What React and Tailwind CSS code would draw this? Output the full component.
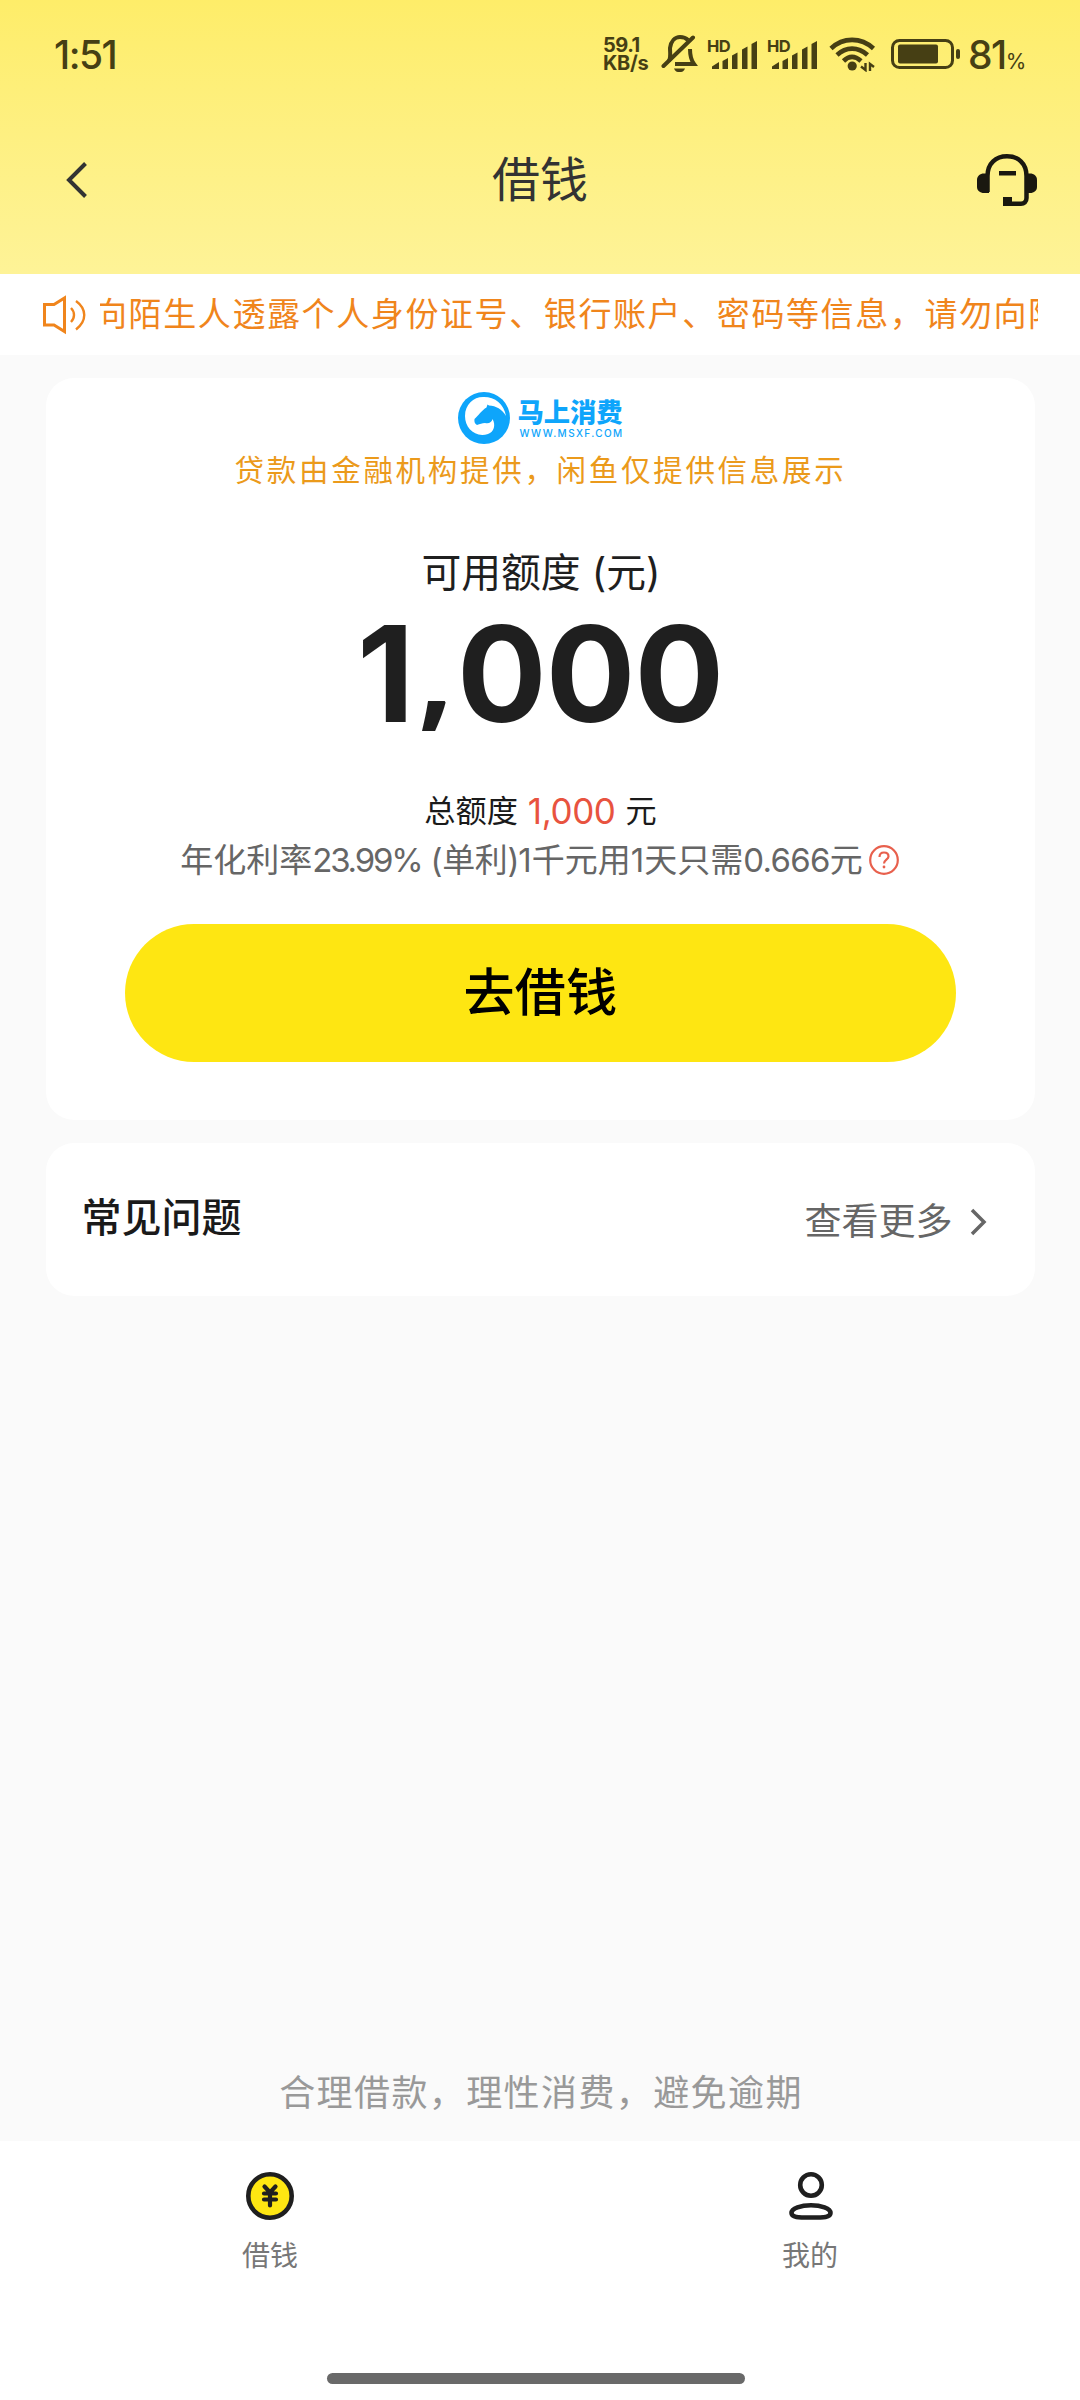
const cjk = "font-[Inter,'Noto_Sans_CJK_SC',sans-serif]";

function BellOff() {
  return (
    <svg width="38" height="40" viewBox="0 0 38 40" fill="none" stroke="#463f14" strokeWidth="4">
      <path d="M8 27C10 23 9 19 9 14C10 7 14 3 19 3C22 3 25 4 27 6" />
      <path d="M29 15C29 22 30 26 33 30H14" />
      <path d="M2.500 32L32 3.500" strokeLinecap="round" />
      <path d="M13 34.500H24C23 37.500 21 38 18.500 38C16 38 14 37.500 13 34.500Z" fill="#463f14" stroke="none" />
    </svg>
  );
}

function Signal() {
  return (
    <div className="flex h-[34px] w-[50px] items-start">
      <span className="mt-[-1px] w-0 whitespace-nowrap text-[16.500px] font-bold leading-[20px] tracking-[-0.500px]">HD</span>
      <svg width="50" height="34" viewBox="0 0 50 34" fill="#463f14">
        <path d="M5 29.500L12 25V32H5Z" />
        <path d="M15.500 24L21 21V32H15.500Z" />
        <path d="M25 18.500L30.500 15.500V32H25Z" />
        <path d="M35 12.500L40.500 9.500V32H35Z" />
        <path d="M44.500 7L50 4V32H44.500Z" />
      </svg>
    </div>
  );
}

function Wifi() {
  return (
    <svg width="48" height="36" viewBox="0 0 48 36" fill="none" stroke="#463f14" strokeWidth="4.6">
      <path d="M2 12.500C14 1 32 1 44.500 12.500" />
      <path d="M8 19C17 10.500 29 10.500 38.500 19" />
      <path d="M14.500 25C20 19.500 26 19.500 32 25" />
      <circle cx="23.200" cy="30" r="4.600" fill="#463f14" stroke="none" />
      <path d="M36.500 27V34L32 30.500M41 35V28L45 31" strokeWidth="2.400" />
    </svg>
  );
}

function Battery() {
  return (
    <svg width="70" height="32" viewBox="0 0 70 32" fill="none">
      <rect x="1.500" y="2.500" width="60" height="27" rx="7" stroke="#463f14" strokeWidth="3" />
      <rect x="7" y="6.500" width="40" height="19" rx="2" fill="#463f14" />
      <rect x="65" y="11" width="4" height="10" rx="2" fill="#463f14" />
    </svg>
  );
}

function StatusBar() {
  return (
    <div className="flex h-[108px] items-center pl-[54px] pr-[53px] font-[Inter] text-[#463f14]">
      <div className="flex-1 text-[39px] font-medium leading-none tracking-[-1.500px]">1:51</div>
      <div className="w-[58px] text-[20px] font-bold leading-[18.500px]">
        <div className="tracking-[-0.500px]">59.1</div>
        <div className="tracking-[-0.300px]">KB/s</div>
      </div>
      <BellOff />
      <div className="ml-[8px]"><Signal /></div>
      <div className="ml-[10px]"><Signal /></div>
      <div className="ml-[12px]"><Wifi /></div>
      <div className="ml-[14px]"><Battery /></div>
      <div className="ml-[7px] flex w-[59px] items-baseline">
        <span className="text-[39px] font-medium leading-none tracking-[-1.500px]">81</span>
        <span className="text-[21px] leading-none">%</span>
      </div>
    </div>
  );
}

function NavBar() {
  return (
    <div className="flex h-[144px] items-center justify-between pl-[65px] pr-[42px]">
      <svg width="39" height="36" viewBox="0 0 39 36" fill="none" stroke="#333" strokeWidth="4">
        <path d="M20.500 1.500L4 18L20.500 34.500" />
      </svg>
      <h1 className="text-[48px] leading-[60px] text-[#333]">借钱</h1>
      <svg width="62" height="54" viewBox="0 0 62 54" fill="none" stroke="#1a1810" strokeWidth="4.500">
        <path d="M11.500 39V23C11.500 10 20 3.300 31 3.300C42 3.300 50.500 10 50.500 23V45C50.500 49 48 50.700 45 50.700H31" />
        <path d="M13 20.500V40H8C4 40 1 37.500 1 34V27C1 23 4 20.500 8 20.500Z" fill="#1a1810" stroke="none" />
        <path d="M49 20.500V40H54C58 40 61 37.500 61 34V27C61 23 58 20.500 54 20.500Z" fill="#1a1810" stroke="none" />
        <rect x="23" y="18" width="17" height="4.500" fill="#1a1810" stroke="none" />
        <rect x="27" y="44" width="9" height="9" fill="#1a1810" stroke="none" />
      </svg>
    </div>
  );
}

function Notice() {
  return (
    <div className="flex h-[81px] items-center bg-white pl-[42px] pr-[42px] text-[#f0851c]">
      <svg width="46" height="40" viewBox="0 0 46 40" fill="none" stroke="currentColor" strokeWidth="3">
        <path d="M2.500 9.500H12L22.500 3V36.500L12 30H2.500Z" />
        <path d="M29 13C33 17 33 23 29 27" strokeWidth="2.400" />
        <path d="M34 6C45 14 45 26 34 34.500" strokeWidth="2.400" />
      </svg>
      <div className="mb-[2px] ml-[12px] flex flex-1 overflow-hidden whitespace-nowrap text-[33px] leading-[50px] tracking-[1.600px]">
        <span className="ml-[-6px]">向陌生人透露个人身份证号、银行账户、密码等信息，请勿向陌</span>
      </div>
    </div>
  );
}

function Logo() {
  return (
    <div className="flex h-[52px] items-center gap-[7px] pl-[2px] text-[#0ea5fb]">
      <svg width="52" height="52" viewBox="0 0 52 52">
        <circle cx="26" cy="26" r="26" fill="#0ea5fb" />
        <path d="M30 42C17 46 7 36 7 24C7 12 16 4.500 26 5C37 5 46 12 48 24C44 17 38 14 31 13.500L29.500 12.500L28.500 15.500C24 18 20 24 16.500 27C16 30 17 32 19 33C22 32 24 31 27 31C31 32 34 30 34.500 27C38 33 36 40 30 42Z" fill="#fff" />
      </svg>
      <div className="flex flex-col">
        <span className="text-[26.300px] font-black leading-[31px]">马上消费</span>
        <span className="pl-[2px] text-[10px] font-medium leading-[11px] tracking-[1.400px]">WWW.MSXF.COM</span>
      </div>
    </div>
  );
}

function QuotaCard() {
  return (
    <div className="flex h-[742px] flex-col items-center rounded-[28px] bg-white pt-[14px]">
      <Logo />
      <p className="mt-[6px] h-[40px] whitespace-nowrap pl-[1px] text-[29.500px] leading-[40px] tracking-[2.700px] text-[#eb9a1b]">
        贷款由金融机构提供，闲鱼仅提供信息展示
      </p>
      <p className="mt-[55px] h-[56px] whitespace-nowrap pl-[2px] text-[39.800px] leading-[56px] text-[#1f1f1f]">可用额度 (元)</p>
      <div className="mt-[13px] h-[120px] whitespace-nowrap text-[133px] font-bold leading-[120px] tracking-[-1px] text-[#1f1f1f]">
        1
        <span className="ml-[5px] mr-[5px] font-['Open_Sans'] text-[122px] leading-[0] align-[7px]">,</span>
        000
      </div>
      <p className="mt-[57px] flex h-[40px] items-center whitespace-nowrap pl-[1px] text-[31.200px] leading-[40px] text-[#1a1a1a]">
        <span>总额度</span>
        <span className="ml-[10px] mr-[10px] text-[35px] tracking-[-0.400px] text-[#e8533f]">1,000</span>
        <span>元</span>
      </p>
      <div className="mt-[9px] flex h-[40px] items-center whitespace-nowrap text-[33px] leading-[40px] text-[#666]">
        <span>年化利率</span>
        <span className="tracking-[-2.200px]">23.99%</span>
        <span className="ml-[9px] tracking-[-0.300px]">(单利)</span>
        <span className="ml-[-1px]">1</span>
        <span>千元用</span>
        <span>1</span>
        <span>天只需</span>
        <span className="tracking-[-0.700px]">0.666</span>
        <span>元</span>
        <svg className="ml-[5px]" width="32" height="32" viewBox="0 0 32 32" fill="none" stroke="#e8604d" strokeWidth="2.200">
          <circle cx="16" cy="16" r="13.800" />
          <path d="M11.500 13C11.500 10 13.500 8.500 16 8.500C18.500 8.500 20.500 10 20.500 12.500C20.500 15.500 16 16 16 19.500" />
          <circle cx="16" cy="23" r="1.400" fill="#e8604d" stroke="none" />
        </svg>
      </div>
      <button className="mt-[44px] h-[138px] w-[831px] rounded-full bg-[#fee612] pl-[1px] text-[51px] font-medium tracking-[0.300px] text-black">去借钱</button>
    </div>
  );
}

function FaqCard() {
  return (
    <div className="mt-[23px] flex h-[153px] items-center justify-between rounded-[28px] bg-white pl-[36px] pr-[46px]">
      <span className="mb-[3px] text-[40px] font-medium leading-[56px] text-[#1a1a1a]">常见问题</span>
      <span className="mt-[5px] flex items-center gap-[16px] text-[37px] leading-[56px] text-[#666]">
        查看更多
        <svg width="20" height="28" viewBox="0 0 20 28" fill="none" stroke="#666" strokeWidth="3.500">
          <path d="M3 2L15 14L3 26" />
        </svg>
      </span>
    </div>
  );
}

function TabBar() {
  return (
    <div className="flex h-[259px] flex-col items-center bg-white">
      <div className="flex h-[232px] w-full">
        <div className="flex flex-1 flex-col items-center pt-[30px]">
          <svg width="50" height="50" viewBox="0 0 50 50" fill="none" stroke="#1f1f1f">
            <circle cx="25" cy="25" r="21.700" fill="#fee612" strokeWidth="4.600" />
            <path d="M19.500 15.500L25 21.500L30.500 15.500M19 22.500H31M19 28.500H31M25 22V34.500" strokeWidth="4.200" strokeLinecap="round" />
          </svg>
          <span className="mt-[15px] text-[28px] leading-[40px] text-[#777]">借钱</span>
        </div>
        <div className="flex flex-1 flex-col items-center pt-[30px]">
          <svg width="50" height="50" viewBox="0 0 50 50" fill="none" stroke="#1f1f1f" strokeWidth="4.600">
            <circle cx="26" cy="14" r="10.800" />
            <path d="M26 34.300C36 34.300 45.500 37.500 45.500 42C45.500 46.500 39 46.500 26 46.500C13 46.500 6.500 46.500 6.500 42C6.500 37.500 16 34.300 26 34.300Z" />
          </svg>
          <span className="mt-[15px] text-[28px] leading-[40px] text-[#777]">我的</span>
        </div>
      </div>
      <div className="mr-[8px] h-[11px] w-[418px] rounded-full bg-[#696969]" />
    </div>
  );
}

export default function App() {
  return (
    <div className={`flex h-[2400px] w-[1080px] flex-col overflow-hidden bg-[#fafafa] ${cjk}`}>
      <header className="h-[274px] bg-linear-to-b from-[#feed69] to-[#fef397]">
        <StatusBar />
        <NavBar />
      </header>
      <Notice />
      <main className="flex flex-1 flex-col px-[45.500px] pt-[23px]">
        <QuotaCard />
        <FaqCard />
        <p className="mt-auto mb-[23px] pl-[2px] text-center text-[36px] leading-[50px] tracking-[1.400px] text-[#999]">
          合理借款，理性消费，避免逾期
        </p>
      </main>
      <TabBar />
    </div>
  );
}
